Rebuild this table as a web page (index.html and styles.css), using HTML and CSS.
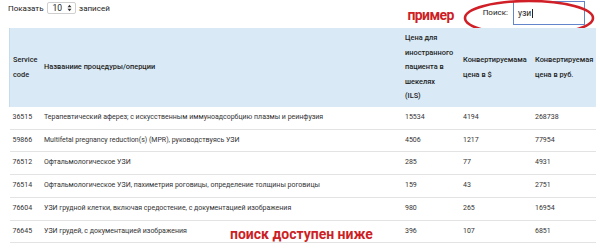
FILE: index.html
```html
<!DOCTYPE html>
<html lang="ru">
<head>
<meta charset="utf-8">
<title>Услуги</title>
<link rel="stylesheet" href="styles.css">
</head>
<body>
<div class="page">
  <div class="toolbar">
    <div class="length">Показать <span class="select">10 <svg class="arrows" width="5" height="8" viewBox="0 0 5 8"><path d="M0.5 3.2 L2.5 0.8 L4.5 3.2 Z M0.5 4.8 L2.5 7.2 L4.5 4.8 Z" fill="#333"/></svg></span> записей</div>
    <div class="filter">
      <span class="note">пример</span>
      <span class="label">Поиск:</span>
      <span class="search">узи<span class="caret"></span></span>
      <svg class="ring" width="134" height="40" viewBox="0 0 134 40"><ellipse cx="66" cy="19" rx="64" ry="17" fill="none" stroke="#d11f27" stroke-width="2.6"/></svg>
    </div>
  </div>
  <div class="table-wrap">
    <table class="prices">
      <thead>
        <tr>
          <th class="c-code">Service code</th>
          <th class="c-name">Названиие процедуры/оперции</th>
          <th class="c-ils"><span class="narrow">Цена для иностранного пациента в шекелях (ILS)</span></th>
          <th class="c-usd">Конвертируемама цена в $</th>
          <th class="c-rub">Конвертируемая цена в руб.</th>
        </tr>
      </thead>
      <tbody>
        <tr><td>36515</td><td>Терапевтический аферез; с искусственным иммуноадсорбцию плазмы и реинфузия</td><td>15534</td><td>4194</td><td>268738</td></tr>
        <tr><td>59866</td><td>Multifetal pregnancy reduction(s) (MPR), руководствуясь УЗИ</td><td>4506</td><td>1217</td><td>77954</td></tr>
        <tr><td>76512</td><td>Офтальмологическое УЗИ</td><td>285</td><td>77</td><td>4931</td></tr>
        <tr><td>76514</td><td>Офтальмологическое УЗИ, пахиметрия роговицы, определение толщины роговицы</td><td>159</td><td>43</td><td>2751</td></tr>
        <tr><td>76604</td><td>УЗИ грудной клетки, включая средостение, с документацией изображения</td><td>980</td><td>265</td><td>16954</td></tr>
        <tr><td>76645</td><td>УЗИ грудей, с документацией изображения</td><td>396</td><td>107</td><td>6851</td></tr>
      </tbody>
    </table>
    <div class="note-bottom">поиск доступен ниже</div>
  </div>
</div>
</body>
</html>
```
FILE: styles.css
```css
html, body {
  margin: 0;
  padding: 0;
  background: #ffffff;
}
body {
  font-family: Roboto, "Noto Sans", "DejaVu Sans", sans-serif;
  color: #333333;
  font-size: 8px;
}
.page {
  width: 600px;
  padding: 0 5px 0 9px;
  box-sizing: border-box;
}
.toolbar {
  display: flex;
  justify-content: space-between;
  align-items: flex-start;
  height: 28px;
}
.length {
  display: flex;
  align-items: center;
  gap: 3px;
  margin-left: -1px;
  margin-top: 2px;
  font-size: 8px;
  color: #222;
}
.select {
  display: inline-flex;
  align-items: center;
  gap: 5px;
  height: 12px;
  padding: 0 3px 0 5px;
  border: 1px solid #cfcfcf;
  border-radius: 2px;
  box-sizing: border-box;
  font-size: 8.5px;
  color: #222;
}
.arrows {
  display: block;
}
.filter {
  position: relative;
  display: flex;
  align-items: flex-start;
  margin-right: 10px;
}
.note {
  margin-top: 8px;
  margin-right: 29px;
  font-weight: 700;
  font-size: 14px;
  line-height: 14px;
  letter-spacing: -0.6px;
  color: #cc1f26;
}
.label {
  margin-top: 8px;
  margin-right: 5px;
  font-size: 8px;
  color: #222;
}
.search {
  margin-top: 1px;
  display: flex;
  align-items: center;
  width: 72px;
  height: 24px;
  padding-left: 4px;
  box-sizing: border-box;
  border: 1.5px solid #6385c9;
  font-size: 8.5px;
  color: #222;
}
.caret {
  display: inline-block;
  width: 1px;
  height: 9px;
  margin-left: 1px;
  background: #222;
}
.ring {
  position: absolute;
  right: -12px;
  top: -1px;
}
.table-wrap {
  position: relative;
}
.prices {
  width: 586px;
  border-collapse: collapse;
  table-layout: fixed;
}
.prices th {
  background: #d9eaf6;
  text-align: left;
  vertical-align: middle;
  font-weight: 500;
  font-size: 7.4px;
  line-height: 14.5px;
  color: #222;
  padding: 3px 3px;
  height: 73px;
}
.prices th.c-code {
  border-left: 1px solid #c6dcec;
}
.narrow {
  display: block;
  max-width: 44px;
}
.c-code { width: 25px; }
.c-name { width: 355px; }
.c-ils { width: 52px; }
.c-usd { width: 66px; }
.c-rub { width: 58px; }
.prices td {
  font-size: 7px;
  color: #333;
  line-height: 21.7px;
  padding: 0 3px;
  border-bottom: 1px solid #e3e3e3;
  white-space: nowrap;
  overflow: hidden;
}
.note-bottom {
  position: absolute;
  left: 221px;
  top: 199px;
  font-weight: 700;
  font-size: 14px;
  line-height: 14px;
  color: #cc1f26;
}
```
